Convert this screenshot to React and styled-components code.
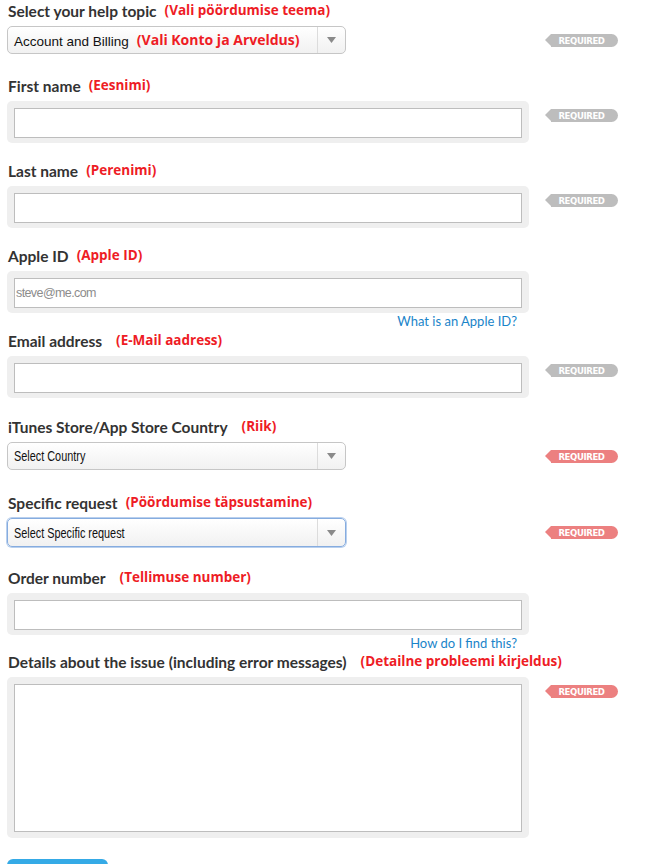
import React from 'react';
import styled, { createGlobalStyle } from 'styled-components'

const GlobalStyle = createGlobalStyle`
  body {
    margin: 0;
    background: #fff;
    font-family: "Liberation Sans", Arial, sans-serif;
  }
`

function Required({ red }) {
  return <Badge $red={red}>REQUIRED</Badge>
}

function Select({ text, note, focused, narrow }) {
  return (
    <SelectBox $focused={focused}>
      <SelectValue>
        <SelectText $narrow={narrow}>{text}</SelectText>
        {note && <InlineNote>{note}</InlineNote>}
      </SelectValue>
      <SelectArrow>
        <svg width="9" height="6" viewBox="0 0 9 6">
          <path d="M0 0 L9 0 L4.5 6 Z" fill="#8a8a8a" />
        </svg>
      </SelectArrow>
    </SelectBox>
  )
}

function App() {
  return (
    <>
      <GlobalStyle />
      <Form>
        <Field $gap={21}>
          <Label>Select your help topic<Note>(Vali pöördumise teema)</Note></Label>
          <Row>
            <Select text="Account and Billing" note="(Vali Konto ja Arveldus)" />
            <Required />
          </Row>
        </Field>

        <Field $gap={17}>
          <Label>First name<Note>(Eesnimi)</Note></Label>
          <Row>
            <InputWell><TextInput /></InputWell>
            <Required />
          </Row>
        </Field>

        <Field $gap={17}>
          <Label>Last name<Note>(Perenimi)</Note></Label>
          <Row>
            <InputWell><TextInput /></InputWell>
            <Required />
          </Row>
        </Field>

        <Field $gap={1}>
          <Label>Apple ID<Note>(Apple ID)</Note></Label>
          <Row>
            <InputWell><TextInput placeholder="steve@me.com" /></InputWell>
          </Row>
          <HelpLink>What is an Apple ID?</HelpLink>
        </Field>

        <Field $gap={18}>
          <Label>Email address<Note $wide>(E-Mail aadress)</Note></Label>
          <Row>
            <InputWell><TextInput /></InputWell>
            <Required />
          </Row>
        </Field>

        <Field $gap={22}>
          <Label>iTunes Store/App Store Country<Note $wide>(Riik)</Note></Label>
          <Row>
            <Select text="Select Country" narrow />
            <Required red />
          </Row>
        </Field>

        <Field $gap={20}>
          <Label>Specific request<Note>(Pöördumise täpsustamine)</Note></Label>
          <Row>
            <Select text="Select Specific request" narrow focused />
            <Required red />
          </Row>
        </Field>

        <Field $gap={0}>
          <Label>Order number<Note $wide>(Tellimuse number)</Note></Label>
          <Row>
            <InputWell><TextInput /></InputWell>
          </Row>
          <HelpLink>How do I find this?</HelpLink>
        </Field>

        <Field $gap={21}>
          <Label>Details about the issue (including error messages)<Note $wide>(Detailne probleemi kirjeldus)</Note></Label>
          <Row>
            <InputWell $tall><TextArea /></InputWell>
            <Required red />
          </Row>
        </Field>

        <SubmitButton />
      </Form>
    </>
  )
}

const Form = styled.form`
  width: 620px;
  padding: 0 0 0 7px;
`

const Field = styled.div`
  margin-bottom: ${p => p.$gap}px;
`

const Label = styled.div`
  height: 20px;
  margin-bottom: 6px;
  padding-left: 1px;
  font-family: Lato, "Open Sans", sans-serif;
  font-weight: 700;
  font-size: 15.5px;
  line-height: 20px;
  color: #333;
  white-space: nowrap;
`

const Note = styled.span`
  margin-left: ${p => (p.$wide ? 14 : 8)}px;
  font-family: "Open Sans", "DejaVu Sans", sans-serif;
  font-weight: 700;
  font-size: 13.5px;
  color: #ee1c25;
  vertical-align: 2px;
`

const InlineNote = styled(Note)`
  margin-left: 8px;
  font-size: 14px;
  vertical-align: 1px;
`

const Row = styled.div`
  display: grid;
  grid-template-columns: 522px 73px;
  column-gap: 16px;
  align-items: start;
`

const SelectBox = styled.div`
  box-sizing: border-box;
  width: 339px;
  height: ${p => (p.$focused ? 29 : 28)}px;
  display: flex;
  align-items: center;
  border: 1px solid ${p => (p.$focused ? '#86acdf' : '#c6c6c6')};
  border-radius: 5px;
  background: linear-gradient(#ffffff, #f1f1f1);
  box-shadow: ${p => (p.$focused ? '0 0 0 1px #b9d0ee' : 'none')};
`

const SelectValue = styled.div`
  flex: 1;
  padding-left: 6px;
  white-space: nowrap;
`

const SelectText = styled.span`
  display: inline-block;
  font-family: "Liberation Sans", Arial, sans-serif;
  font-size: ${p => (p.$narrow ? 14.5 : 13.5)}px;
  color: #111;
  transform: ${p => (p.$narrow ? 'scaleX(0.75)' : 'none')};
  transform-origin: left center;
`

const SelectArrow = styled.div`
  width: 27px;
  height: 100%;
  display: flex;
  align-items: center;
  justify-content: center;
  border-left: 1px solid #dcdcdc;
`

const InputWell = styled.div`
  padding: 7px 7px ${p => (p.$tall ? 6 : 5)}px;
  background: #efefef;
  border-radius: 5px;
`

const TextInput = styled.input`
  display: block;
  box-sizing: border-box;
  width: 508px;
  height: 30px;
  margin: 0;
  padding: 0 6px 0 1px;
  border: 1px solid #bdbdbd;
  background: #fff;
  font-family: "Liberation Sans", Arial, sans-serif;
  font-size: 12.5px;
  letter-spacing: -0.6px;
  &::placeholder {
    color: #8c8c8c;
  }
`

const TextArea = styled.textarea`
  display: block;
  box-sizing: border-box;
  width: 508px;
  height: 148px;
  margin: 0;
  border: 1px solid #bdbdbd;
  resize: none;
  background: #fff;
`

const HelpLink = styled.div`
  width: 510px;
  height: 16px;
  text-align: right;
  font-family: Lato, "Open Sans", sans-serif;
  font-size: 13px;
  line-height: 16px;
  color: #1a84c9;
`

const Badge = styled.div`
  position: relative;
  box-sizing: border-box;
  width: 67px;
  height: 13px;
  margin: 8px 0 0 6px;
  border-radius: 0 7px 7px 0;
  background: ${p => (p.$red ? '#ec8080' : '#bdbdbd')};
  color: #fff;
  font-family: "DejaVu Sans Condensed", "DejaVu Sans", sans-serif;
  font-weight: 700;
  font-size: 9.5px;
  line-height: 13px;
  letter-spacing: -0.4px;
  text-align: center;
  padding-right: 6px;
  &::before {
    content: '';
    position: absolute;
    left: -6px;
    top: 0;
    border-style: solid;
    border-width: 6.5px 6px 6.5px 0;
    border-color: transparent ${p => (p.$red ? '#ec8080' : '#bdbdbd')} transparent transparent;
  }
`

const SubmitButton = styled.button`
  display: block;
  width: 101px;
  height: 30px;
  border: none;
  border-radius: 6px;
  background: #35aae6;
`

export default App
